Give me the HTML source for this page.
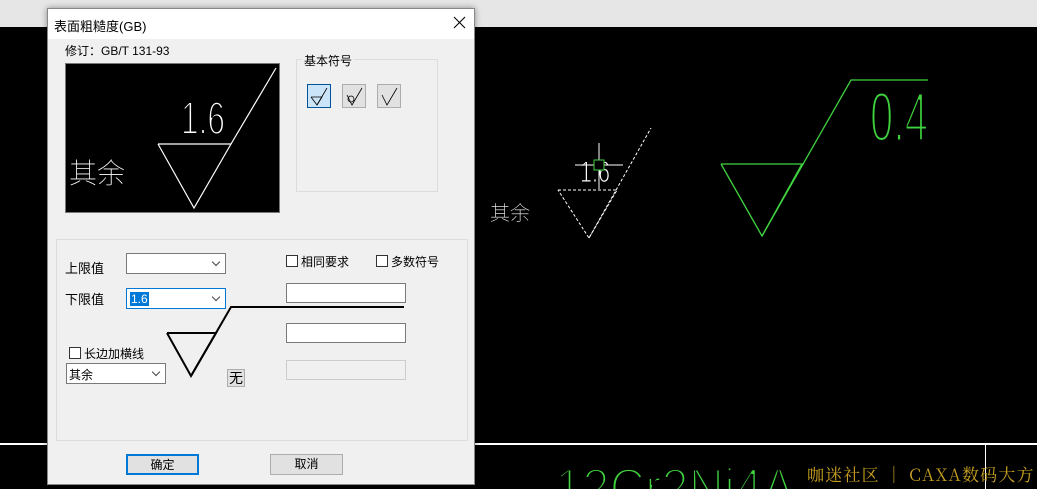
<!DOCTYPE html>
<html><head><meta charset="utf-8"><style>
*{margin:0;padding:0;box-sizing:border-box}
html,body{overflow:hidden}
body{width:1037px;height:489px;background:#000;position:relative;overflow:hidden;font-family:"Microsoft YaHei","Liberation Sans","Noto Sans CJK SC",sans-serif;font-size:12px;color:#000}
.a{position:absolute}
.dlg{left:47px;top:8px;width:428px;height:477px;background:#f0f0f0;border:1px solid #888;box-shadow:0 0 6px rgba(0,0,0,.4)}
.combo{background:#fff;border:1px solid #7a7a7a;height:21px}
.combo .arr{position:absolute;right:6px;top:5px;width:6px;height:6px;border-right:1px solid #444;border-bottom:1px solid #444;transform:rotate(45deg)}
.tb{background:#fff;border:1px solid #7a7a7a;width:120px;height:20px}
.cb{width:12px;height:12px;border:1px solid #333;background:#fff}
.btn{border:1px solid #adadad;background:#e1e1e1;width:73px;height:21px;text-align:center;line-height:19px}
.thin{paint-order:normal;stroke:#000}
</style></head><body>
<div class="a" style="left:0;top:0;width:1037px;height:27px;background:#e6e6e6"></div>
<div class="a" style="left:0;top:443px;width:1037px;height:2px;background:#fff"></div>
<div class="a" style="left:985px;top:444px;width:1px;height:45px;background:#fff"></div>
<svg class="a" style="left:0;top:0" width="1037" height="489">
<g stroke="#3fd23f" fill="none" stroke-width="1.3">
<polyline points="721,164 802,164 762,236 721,164"/>
<polyline points="762,236 851,80 928,80"/>
</g>
<text class="thin" x="870" y="141" fill="#3fd23f" stroke-width="3" font-family="Liberation Sans Narrow,Liberation Sans,sans-serif" font-size="70" textLength="58" lengthAdjust="spacingAndGlyphs">0.4</text>
<g stroke="#fff" fill="none" stroke-dasharray="3,2" stroke-width="1">
<polyline points="558,190 617,190 589,238 558,190"/>
<line x1="589" y1="238" x2="651" y2="128"/>
</g>
<text x="490" y="220" fill="#fff" font-size="20" font-family="Noto Sans CJK SC,sans-serif" font-weight="100">其余</text>
<text class="thin" x="580" y="182" fill="#fff" stroke-width="1" font-size="30" font-family="Liberation Sans Narrow,Liberation Sans,sans-serif" textLength="30" lengthAdjust="spacingAndGlyphs">1.6</text>
<g stroke="#fff"><line x1="575" y1="165" x2="623" y2="165"/><line x1="599" y1="143" x2="599" y2="189"/></g>
<rect x="594" y="160" width="10" height="10" fill="#000" stroke="#3fd23f"/>
<text class="thin" x="555" y="506" fill="#3fd23f" stroke-width="3" font-size="54" font-family="Liberation Sans Narrow,Liberation Sans,sans-serif" textLength="240" lengthAdjust="spacingAndGlyphs">12Cr2Ni4A</text>
</svg>
<div class="a" style="left:807px;top:462px;height:24px;line-height:24px;color:#c8a020;font-family:'Noto Serif CJK SC','Liberation Serif',serif;font-size:17px;white-space:nowrap;letter-spacing:1.2px">咖迷社区 │ CAXA数码大方</div>

<div class="a dlg">
 <div class="a" style="left:0;top:0;width:426px;height:30px;background:#fff"></div>
 <div class="a" style="left:6px;top:7px;font-size:13px">表面粗糙度(GB)</div>
 <svg class="a" style="left:405px;top:7px" width="14" height="14"><g stroke="#000" stroke-width="1.1"><line x1="1" y1="1" x2="12" y2="12"/><line x1="12" y1="1" x2="1" y2="12"/></g></svg>
 <div class="a" style="left:17px;top:33px;font-size:12px">修订：GB/T 131-93</div>
 <svg class="a" style="left:17px;top:54px" width="215" height="150">
  <rect x="0.5" y="0.5" width="214" height="149" fill="#000" stroke="#777"/>
  <g stroke="#fff" fill="none" stroke-width="1.2">
   <polyline points="93,81 166,81 129,145 93,81"/>
   <line x1="166" y1="81" x2="211" y2="5"/>
  </g>
  <text class="thin" x="116" y="71" fill="#fff" stroke-width="2" font-size="46" font-family="Liberation Sans Narrow,Liberation Sans,sans-serif" textLength="44" lengthAdjust="spacingAndGlyphs">1.6</text>
  <text x="4" y="120" fill="#fff" font-size="28" font-family="Noto Sans CJK SC,sans-serif" font-weight="100">其余</text>
 </svg>
 <div class="a" style="left:248px;top:50px;width:142px;height:133px;border:1px solid #dcdcdc"></div>
 <div class="a" style="left:254px;top:43px;background:#f0f0f0;padding:0 2px">基本符号</div>
 <svg class="a" style="left:259px;top:75px" width="100" height="26">
  <rect x="0.5" y="0.5" width="23" height="23" fill="#cce4f7" stroke="#005499"/>
  <rect x="35.5" y="0.5" width="23" height="23" fill="#e1e1e1" stroke="#adadad"/>
  <rect x="70.5" y="0.5" width="23" height="23" fill="#e1e1e1" stroke="#adadad"/>
  <g stroke="#000" fill="none" stroke-width=".8">
   <polyline points="4,13 15,13 10,21 4,13"/><line x1="10" y1="21" x2="20" y2="4"/>
   <circle cx="44" cy="15" r="3"/><polyline points="40,11 45,21 55,4"/>
   <polyline points="75,11 80,21 90,4"/>
  </g>
 </svg>
 <div class="a" style="left:8px;top:230px;width:412px;height:202px;border:1px solid #dcdcdc"></div>
 <div class="a" style="left:17px;top:249px;font-size:13px">上限值</div>
 <div class="a combo" style="left:78px;top:244px;width:100px"><div class="arr"></div></div>
 <div class="a" style="left:17px;top:280px;font-size:13px">下限值</div>
 <div class="a combo" style="left:78px;top:279px;width:100px;border-color:#0078d7"><span class="a" style="left:3px;top:3px;background:#0078d7;color:#fff;line-height:14px;padding:0 1px">1.6</span><div class="arr"></div></div>
 <div class="a cb" style="left:238px;top:246px"></div><div class="a" style="left:253px;top:244px;font-size:12px">相同要求</div>
 <div class="a cb" style="left:328px;top:246px"></div><div class="a" style="left:343px;top:244px;font-size:12px">多数符号</div>
 <div class="a tb" style="left:238px;top:274px"></div>
 <div class="a tb" style="left:238px;top:314px"></div>
 <div class="a tb" style="left:238px;top:351px;background:#f0f0f0;border-color:#ccc"></div>
 <svg class="a" style="left:110px;top:290px" width="250" height="90">
  <g stroke="#000" fill="none" stroke-width="2">
   <polyline points="9,34 58,34 33,77 9,34"/>
   <polyline points="33,77 73,8 246,8"/>
  </g>
 </svg>
 <div class="a" style="left:179px;top:360px;width:18px;height:18px;border:1px solid #adadad;background:#e1e1e1;font-size:14px;line-height:16px;text-align:center">无</div>
 <div class="a cb" style="left:21px;top:338px"></div><div class="a" style="left:36px;top:336px;font-size:12px">长边加横线</div>
 <div class="a combo" style="left:18px;top:354px;width:100px"><span class="a" style="left:2px;top:2px;font-size:12px">其余</span><div class="arr"></div></div>
 <div class="a btn" style="left:78px;top:445px;border:2px solid #0078d7">确定</div>
 <div class="a btn" style="left:222px;top:445px">取消</div>
</div>
</body></html>
